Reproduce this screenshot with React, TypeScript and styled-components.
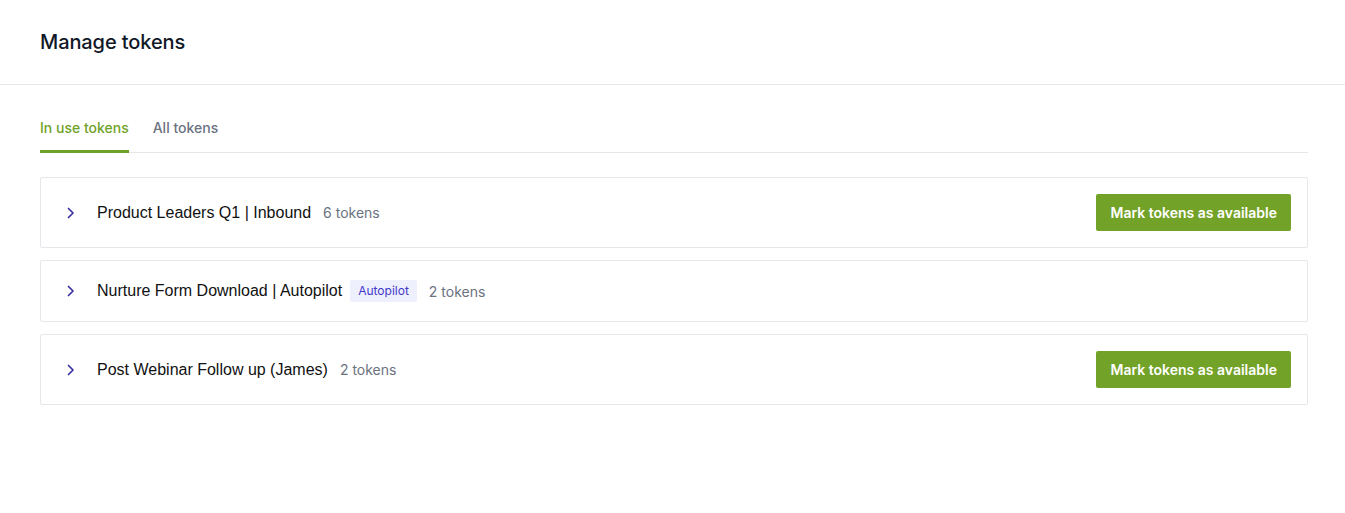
import React from "react";
import styled, { createGlobalStyle } from "styled-components";

const GlobalStyle = createGlobalStyle`
  html, body { margin: 0; padding: 0; background: #ffffff; }
  body { font-family: Inter, "Noto Sans", sans-serif; color: #111827; }
  * { box-sizing: border-box; }
`;

const Header = styled.header`
  height: 85px;
  display: flex;
  align-items: center;
  padding: 0 40px;
  border-bottom: 1px solid #e5e7eb;
`;

const Title = styled.h1`
  margin: 0;
  font-size: 20px;
  font-weight: 500;
  color: #111827;
  letter-spacing: -0.1px;
`;

const Content = styled.main`
  padding: 33px 37px 0 40px;
  display: flex;
  flex-direction: column;
`;

const TabList = styled.div`
  display: flex;
  gap: 24px;
  border-bottom: 1px solid #e5e7eb;
`;

const Tab = styled.button<{ $active?: boolean }>`
  background: none;
  border: none;
  padding: 0 0 12px;
  margin-bottom: -1px;
  font-family: Inter, sans-serif;
  font-size: 14px;
  font-weight: 500;
  line-height: 20px;
  cursor: pointer;
  color: ${(p) => (p.$active ? "#70a227" : "#6b7280")};
  border-bottom: 3px solid ${(p) => (p.$active ? "#70a227" : "transparent")};
`;

const List = styled.div`
  margin-top: 24px;
  display: flex;
  flex-direction: column;
  gap: 12px;
`;

const Row = styled.div`
  display: flex;
  align-items: center;
  min-height: 62px;
  padding: 16px 16px 16px 20px;
  border: 1px solid #e5e7eb;
  border-radius: 2px;
  background: #fff;
`;

const Chevron = styled.span`
  width: 20px;
  height: 28px;
  display: flex;
  align-items: center;
  justify-content: center;
  color: #3730a3;
  flex-shrink: 0;
`;

const RowMain = styled.div`
  display: flex;
  align-items: center;
  gap: 8px;
  margin-left: 16px;
  flex: 1;
`;

const RowTitle = styled.span`
  font-family: "Liberation Sans", Arial, sans-serif;
  font-size: 16px;
  color: #111111;
  line-height: 28px;
`;

const Count = styled.span`
  font-size: 14px;
  color: #6b7280;
  margin-left: 4px;
`;

const Badge = styled.span`
  font-size: 12px;
  line-height: 22px;
  padding: 0 8px;
  border-radius: 2px;
  background: #eef0fe;
  color: #4338ca;
`;

const Button = styled.button`
  height: 37px;
  padding: 0 14px;
  border: none;
  border-radius: 2px;
  background: #72a227;
  color: #ffffff;
  font-family: Inter, sans-serif;
  font-size: 14px;
  font-weight: 600;
  cursor: pointer;
`;

type Item = { title: string; count: number; badge?: string; action: boolean };

const items: Item[] = [
  { title: "Product Leaders Q1 | Inbound", count: 6, action: true },
  { title: "Nurture Form Download | Autopilot", count: 2, badge: "Autopilot", action: false },
  { title: "Post Webinar Follow up (James)", count: 2, action: true },
];

const ChevronIcon = () => (
  <svg width="10" height="12" viewBox="0 0 10 12" fill="none">
    <polyline
      points="2.5,1.5 7,6 2.5,10.5"
      stroke="currentColor"
      strokeWidth="1.7"
      strokeLinecap="round"
      strokeLinejoin="round"
    />
  </svg>
);

export default function App() {
  return (
    <>
      <GlobalStyle />
      <Header>
        <Title>Manage tokens</Title>
      </Header>
      <Content>
        <TabList>
          <Tab $active>In use tokens</Tab>
          <Tab>All tokens</Tab>
        </TabList>
        <List>
          {items.map((it) => (
            <Row key={it.title}>
              <Chevron>
                <ChevronIcon />
              </Chevron>
              <RowMain>
                <RowTitle>{it.title}</RowTitle>
                {it.badge && <Badge>{it.badge}</Badge>}
                <Count>{it.count} tokens</Count>
              </RowMain>
              {it.action && <Button>Mark tokens as available</Button>}
            </Row>
          ))}
        </List>
      </Content>
    </>
  );
}
